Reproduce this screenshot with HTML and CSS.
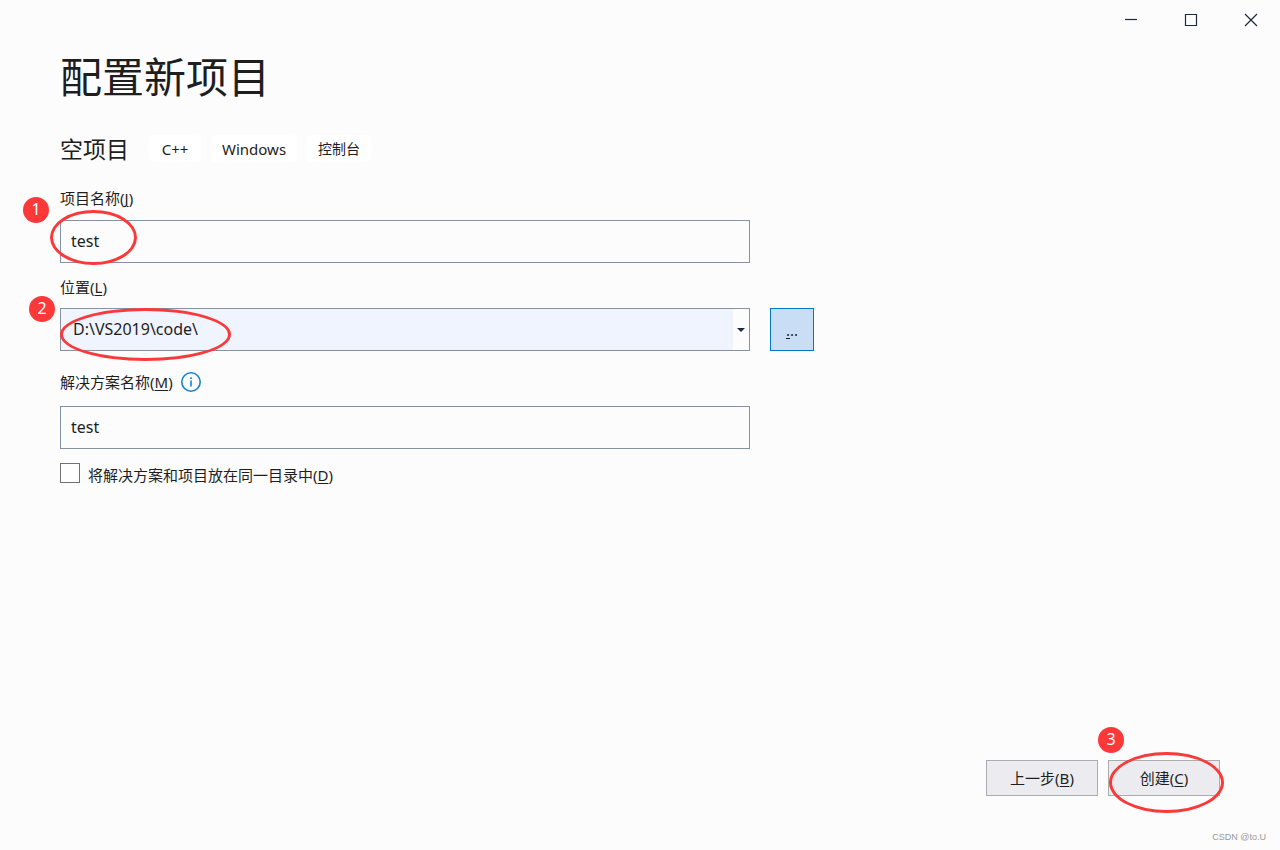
FILE: index.html
```html
<!DOCTYPE html>
<html lang="zh-CN">
<head>
<meta charset="utf-8">
<meta name="viewport" content="width=device-width, initial-scale=1">
<title>配置新项目</title>
<link rel="stylesheet" href="styles.css">
</head>
<body>
<header class="titlebar">
  <button class="window-button" type="button" aria-label="最小化"><svg width="14" height="14" viewBox="0 0 14 14"><path d="M1 6.5h12"/></svg></button>
  <button class="window-button" type="button" aria-label="最大化"><svg width="14" height="14" viewBox="0 0 14 14"><path d="M1.5 1.5h11v11h-11z"/></svg></button>
  <button class="window-button" type="button" aria-label="关闭"><svg width="14" height="14" viewBox="0 0 14 14"><path d="M1 1l12 12M13 1L1 13"/></svg></button>
</header>
<main class="content">
  <h1 class="title">配置新项目</h1>
  <div class="template">
    <h2 class="template-name">空项目</h2>
    <ul class="tags">
      <li class="tag">C++</li>
      <li class="tag">Windows</li>
      <li class="tag tag-cjk">控制台</li>
    </ul>
  </div>
  <form class="form" id="project">
    <div class="field field-name">
      <label class="label" for="name">项目名称(<u>J</u>)</label>
      <div class="control">
        <input class="textbox" id="name" type="text" value="test">
        <span class="ring ring-name"></span>
        <span class="badge badge-name">1</span>
      </div>
    </div>
    <div class="field field-location">
      <label class="label" for="location">位置(<u>L</u>)</label>
      <div class="location-row">
        <div class="control">
          <select class="combo" id="location"><option>D:\VS2019\code\</option></select>
          <svg class="combo-arrow" width="8" height="4" viewBox="0 0 8 4"><path d="M0 0h8L4 4z"/></svg>
          <span class="ring ring-location"></span>
          <span class="badge badge-location">2</span>
        </div>
        <button class="browse" type="button" aria-label="浏览"><u>.</u>..</button>
      </div>
    </div>
    <div class="field field-solution">
      <div class="label-row">
        <label class="label" for="solution">解决方案名称(<u>M</u>)</label>
        <svg class="info" width="20" height="20" viewBox="0 0 20 20"><circle cx="10" cy="10" r="9.2"/><path d="M10 8.5v6M10 5.2v1.8"/></svg>
      </div>
      <input class="textbox" id="solution" type="text" value="test">
    </div>
    <div class="check-row">
      <input class="checkbox" id="same-dir" type="checkbox">
      <label class="label check-label" for="same-dir">将解决方案和项目放在同一目录中(<u>D</u>)</label>
    </div>
  </form>
</main>
<footer class="footer">
  <div class="actions">
    <button class="action" type="button">上一步(<u>B</u>)</button>
    <div class="create">
      <button class="action" type="submit" form="project">创建(<u>C</u>)</button>
      <span class="ring ring-create"></span>
      <span class="badge badge-create">3</span>
    </div>
  </div>
  <p class="watermark">CSDN @to.U</p>
</footer>
</body>
</html>
```

FILE: styles.css
```css
* {
  box-sizing: border-box;
}

body {
  margin: 0;
  min-height: 100vh;
  display: flex;
  flex-direction: column;
  background: #fcfcfc;
  color: #1e1e1e;
  font: 15px/20px "Noto Sans", "Noto Sans CJK SC", sans-serif;
}

button,
input,
select {
  margin: 0;
  border-radius: 0;
  font: inherit;
  color: inherit;
}

u {
  text-decoration-thickness: 1px;
  text-underline-offset: 2px;
}

.titlebar {
  display: flex;
  justify-content: flex-end;
  gap: 2px;
}

.window-button {
  display: grid;
  place-items: center;
  width: 58px;
  height: 40px;
  padding: 0;
  border: 0;
  background: none;
}

.window-button svg {
  fill: none;
  stroke: #1b293e;
  stroke-width: 1.2;
}

.content {
  flex: 1;
  padding: 10px 60px;
}

.title {
  margin: 0;
  font-family: "Noto Sans CJK SC", sans-serif;
  font-size: 42px;
  font-weight: 400;
  line-height: 50px;
}

.template {
  display: flex;
  align-items: center;
  flex-wrap: wrap;
  gap: 20px;
  margin-top: 35px;
}

.template-name {
  margin: 0;
  font-family: "Noto Sans CJK SC", sans-serif;
  font-size: 23px;
  font-weight: 400;
  line-height: 27px;
}

.tags {
  display: flex;
  gap: 10px;
  margin: 0;
  padding: 0;
  list-style: none;
}

.tag {
  min-width: 52px;
  padding: 1px 11px 0;
  border-radius: 5px;
  background: #fff;
  font-size: 15px;
  line-height: 26px;
  text-align: center;
}

.tag-cjk {
  font-size: 14px;
}

.form {
  width: 100%;
}

.field-name {
  margin-top: 26px;
}

.field-location {
  margin-top: 14px;
}

.field-solution {
  margin-top: 21px;
}

.label {
  display: block;
}

.control {
  position: relative;
  width: 100%;
  max-width: 690px;
  margin-top: 12px;
}

.location-row {
  display: flex;
  gap: 20px;
  margin-top: 11px;
}

.location-row .control {
  margin-top: 0;
}

.textbox,
.combo {
  display: block;
  width: 100%;
  max-width: 690px;
  height: 43px;
  border: 1px solid #8591a5;
  background: #fcfcfc;
  font-size: 16px;
}

.textbox {
  padding: 0 10px 2px;
}

.combo {
  appearance: none;
  padding: 0 28px 2px 12px;
  background: linear-gradient(to left, #fcfcfc 16px, #f0f4fe 16px);
}

.combo-arrow {
  position: absolute;
  top: 20px;
  right: 5px;
  fill: #1b293e;
  pointer-events: none;
}

.browse {
  flex: none;
  width: 44px;
  height: 43px;
  padding: 0;
  border: 1px solid #0078c8;
  background: #c9def5;
}

.label-row {
  display: flex;
  align-items: center;
  gap: 8px;
  margin-bottom: 14px;
}

.info {
  fill: none;
  stroke: #1382d4;
  stroke-width: 1.6;
}

.check-row {
  display: flex;
  align-items: flex-start;
  gap: 8px;
  margin-top: 14px;
}

.check-label {
  padding-top: 2px;
}

.checkbox {
  appearance: none;
  flex: none;
  width: 20px;
  height: 20px;
  border: 1px solid #717171;
  background: #fefefe;
}

.footer {
  padding: 0 14px 3px 60px;
}

.actions {
  display: flex;
  justify-content: flex-end;
  gap: 10px;
  padding-right: 46px;
}

.action {
  width: 112px;
  height: 36px;
  padding: 0;
  border: 1px solid #acacac;
  background: #ececf0;
}

.create {
  position: relative;
}

.watermark {
  margin: 31px 0 0;
  color: #999;
  font: 9px/20px "Liberation Sans", sans-serif;
  text-align: right;
}

.ring {
  position: absolute;
  border: 3px solid #fa3a3a;
  border-radius: 50%;
  pointer-events: none;
}

.ring-name {
  top: -10px;
  left: -10px;
  width: 87px;
  height: 55px;
}

.ring-location {
  top: 0;
  left: 0;
  width: 171px;
  height: 53px;
}

.ring-create {
  top: -8px;
  left: 1px;
  width: 115px;
  height: 61px;
}

.badge {
  position: absolute;
  width: 26px;
  height: 26px;
  border-radius: 50%;
  background: #fd3838;
  color: #fff;
  font-size: 16px;
  line-height: 24px;
  text-align: center;
}

.badge-name {
  top: -23px;
  left: -37px;
}

.badge-location {
  top: -12px;
  left: -31px;
}

.badge-create {
  top: -33px;
  left: -10px;
}
```
